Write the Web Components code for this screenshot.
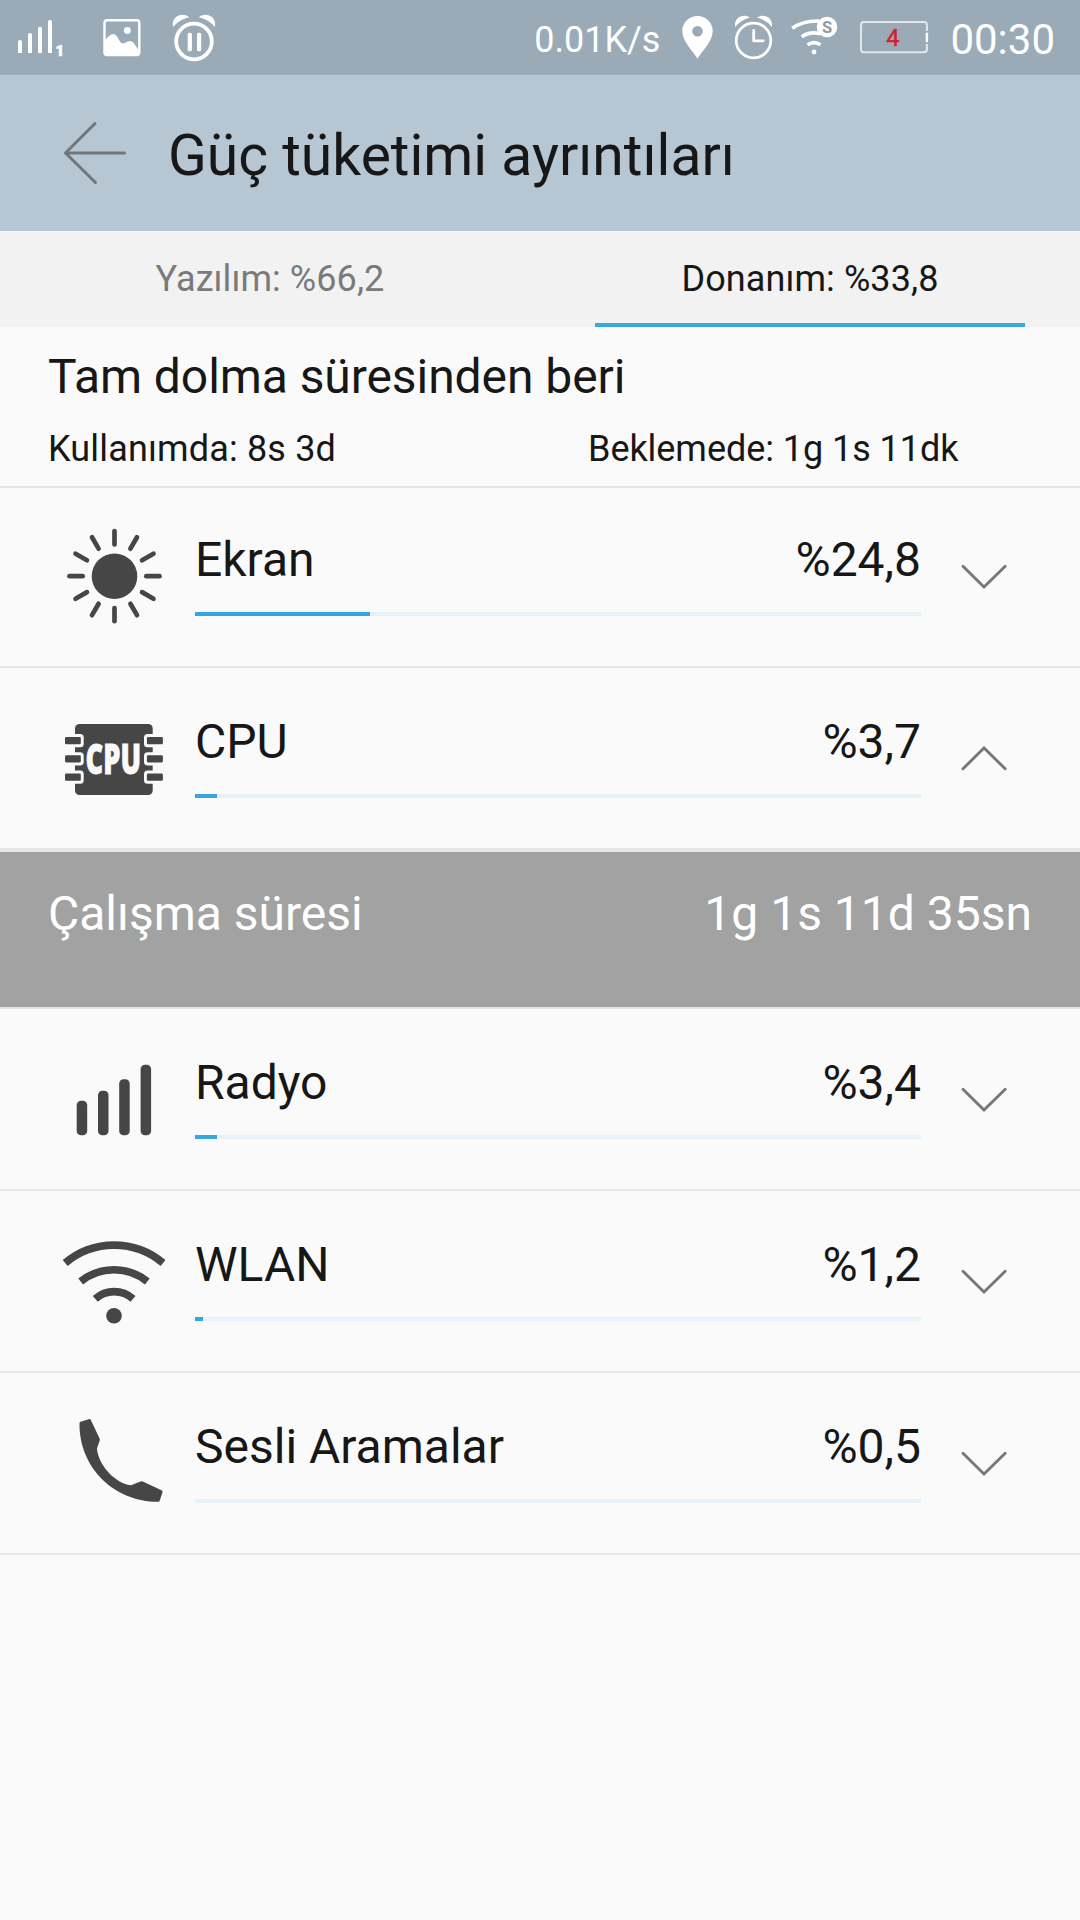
<!DOCTYPE html>
<html lang="tr">
<head>
<meta charset="utf-8">
<title>Güç tüketimi ayrıntıları</title>
<style>
  body {
    margin: 0;
    background: #fafafa;
    color: #171717;
    font-family: Roboto, "Noto Sans", sans-serif;
  }
</style>
</head>
<body>
<power-app></power-app>

<script>
const ICONS = {
  // status bar, drawn in bar coordinates
  signal: {
    box: "14 0 52 75",
    body: `<path d="M18 41.5q0-1.5 2-1.5t2 1.5V53h-4zM28 34.5q0-1.5 2-1.5t2 1.5V53h-4zM38 28.2q0-1.5 2-1.5t2 1.5V53h-4zM48 21.5q0-1.5 2-1.5t2 1.5V53h-4z"/>
      <text x="55.5" y="55.500" font-size="15" font-weight="900" stroke="currentColor" stroke-width=".6">1</text>`,
  },
  picture: {
    box: "100 0 44 75",
    body: `<rect x="104.5" y="20.2" width="34.8" height="34.8" rx="2.5" fill="none" stroke="currentColor" stroke-width="2.4"/>
      <circle cx="127.3" cy="30.5" r="3.4"/>
      <path d="M104 42q5-8 9.500-8c4 0 5.500 9 9.300 9.500 2.500 0 4-2.500 7.200-2.500 3.500 0 5.500 4.500 9 10V55h-35z"/>`,
  },
  pause: {
    box: "170 0 48 75",
    body: `<circle cx="194" cy="41.500" r="17.800" fill="none" stroke="currentColor" stroke-width="3.800"/>
      <rect x="187.700" y="32.700" width="4.200" height="18.600" rx="1.500"/><rect x="197" y="32.700" width="4.200" height="18.600" rx="1.500"/>
      <path d="M173.200 27C170.500 18 181 11 189.200 17.200Q179 19.500 173.200 27zM214.800 27C217.500 18 207 11 198.800 17.200Q209 19.500 214.800 27z"/>`,
  },
  pin: {
    box: "680 0 36 75",
    body: `<path fill-rule="evenodd" d="M697.500 16c-8.500 0-15.200 6.700-15.200 15 0 10.500 10 19 15.200 27.700C702.700 50 712.700 41.500 712.700 31c0-8.300-6.700-15-15.200-15zm0 9.900a5.300 5.300 0 1 1 0 10.600 5.300 5.300 0 0 1 0-10.600z"/>`,
  },
  alarm: {
    box: "732 0 44 75",
    body: `<circle cx="753.500" cy="40.500" r="17.300" fill="none" stroke="currentColor" stroke-width="2.700"/>
      <path d="M753.700 30.500v10.300h9.500" fill="none" stroke="currentColor" stroke-width="2.800" stroke-linecap="round" stroke-linejoin="round"/>
      <path d="M735.200 27C733.500 18.500 742 12.500 750 17.500Q740.500 20 735.200 27zM771.800 27C773.500 18.500 765 12.500 757 17.500Q766.500 20 771.800 27z"/>`,
  },
  wifis: {
    box: "788 0 52 75",
    body: `<g fill="none" stroke="currentColor" stroke-width="3.600"><path d="M792.200 28.300Q803 20.500 819 21"/><path d="M801.700 36.700Q810 31 820.500 33.800"/><path d="M807.500 44.800q6.500-4.400 13 0"/></g>
      <circle cx="814" cy="52" r="2.400"/><circle cx="827" cy="27" r="10.300"/>
      <text x="827" y="33" text-anchor="middle" font-size="16.500" font-weight="700" fill="#8a9ba8">S</text>`,
  },
  battery: {
    box: "858 0 72 75",
    body: `<path d="M926.900 31V25q0-3-3-3H864q-3 0-3 3v24.300q0 3 3 3h59.900q3 0 3-3V44" fill="none" stroke="#e0e8ec" stroke-width="2"/>
      <path d="M926.900 32.700v9.500" stroke="currentColor" stroke-width="2.400"/>
      <text x="892.800" y="45.700" text-anchor="middle" font-size="23.500" fill="#d3212c" stroke="#d3212c" stroke-width=".5">4</text>`,
  },

  // list rows
  sun: {
    box: "0 0 120 120",
    body: `<circle cx="60.500" cy="60.200" r="22.800"/><g stroke="currentColor" stroke-width="4.700" stroke-linecap="round">` +
      Array.from({ length: 12 }, (_, i) => `<path d="M60.500 15.200v13.200" transform="rotate(${i * 30} 60.500 60.200)"/>`).join("") + `</g>`,
  },
  cpu: {
    box: "0 0 120 120",
    body: `<rect x="21" y="26" width="77.700" height="71" rx="4.500"/>` +
      [39, 57.200, 75.600].map((y) => `
        <rect x="5" y="${y - 3}" width="24.700" height="13.200" rx="3.500" fill="#fafafa"/><rect x="11" y="${y}" width="15.800" height="7.200" rx="1.300"/>
        <rect x="90" y="${y - 3}" width="25" height="13.200" rx="3.500" fill="#fafafa"/><rect x="92.900" y="${y}" width="16" height="7.200" rx="1.300"/>`).join("") +
      `<text x="31.500" y="75.500" textLength="55.500" lengthAdjust="spacingAndGlyphs" font-family="Open Sans" font-size="42" font-weight="800" fill="#fafafa" stroke="#fafafa" stroke-width=".8">CPU</text>`,
  },
  radio: {
    box: "0 0 120 120",
    body: `<rect x="22.700" y="61.700" width="10.500" height="34.500" rx="4.300"/><rect x="44" y="51.700" width="10.500" height="44.500" rx="4.300"/>
      <rect x="65.200" y="40.300" width="10.500" height="55.900" rx="4.300"/><rect x="86.600" y="25.700" width="10.500" height="70.500" rx="4.300"/>`,
  },
  wlan: {
    box: "0 0 120 120",
    body: `<g fill="none" stroke="currentColor" stroke-width="7.600"><path d="M11.200 42a75.700 75.700 0 0 1 97.800 0"/><path d="M26.700 60.500a52.900 52.900 0 0 1 66.600 0"/><path d="M41.300 77.900a28.100 28.100 0 0 1 37.700 0"/></g>
      <circle cx="60" cy="94.700" r="7.800"/>`,
  },
  phone: {
    box: "0 0 120 120",
    body: `<path d="M26.500 18.800L35.500 16Q36.300 15.900 36.700 16.700L45.600 35.500Q46 36.500 45.700 37.500L43 45.500C44 61 60 80 77 82.300L86.500 78.600Q87.700 78.100 88.800 78.600L107.500 87.300Q108.900 88 108.500 89.300L105.800 97.500Q105.300 98.900 104 98.800C62 99 25 66 25.500 20.200Q25.600 19.100 26.500 18.800z"/>`,
  },

  back: {
    box: "0 0 64 64",
    body: `<path d="M62.500 32H3.500M33 2.500L3.500 32 33.500 61.500" fill="none" stroke="currentColor" stroke-width="3" stroke-linecap="round" stroke-linejoin="round"/>`,
  },
  down: {
    box: "0 0 48 26",
    body: `<path d="M3 2.200L24 23 45.200 2.200" fill="none" stroke="currentColor" stroke-width="2.900" stroke-linecap="round"/>`,
  },
  up: {
    box: "0 0 48 26",
    body: `<path d="M3 22.800L24 2 45.200 22.800" fill="none" stroke="currentColor" stroke-width="2.900" stroke-linecap="round"/>`,
  },
};

class UiIcon extends HTMLElement {
  constructor() {
    super();
    this.attachShadow({ mode: "open" });
  }

  connectedCallback() {
    const icon = ICONS[this.getAttribute("name")];
    const [, , width, height] = icon.box.split(" ");

    this.shadowRoot.innerHTML = `
      <style>
        :host { display: block; flex: none; }
        svg { display: block; fill: currentColor; }
      </style>
      <svg width="${width}" height="${height}" viewBox="${icon.box}">${icon.body}</svg>
    `;
  }
}

class StatusBar extends HTMLElement {
  constructor() {
    super();
    this.attachShadow({ mode: "open" });
    this.shadowRoot.innerHTML = `
      <style>
        :host {
          display: flex;
          justify-content: space-between;
          height: 75px;
          padding: 0 25px 0 14px;
          background: #9aabb7;
          color: #fff;
        }
        .left, .right { display: flex; align-items: center; }
        .picture { margin: 0 26px 0 34px; }
        .speed { font-size: 36px; line-height: 42px; padding-top: 4px; margin-right: 20px; }
        .time { font-size: 42px; line-height: 50px; padding-top: 4px; margin-left: 20px; }
        .alarm { margin-left: 16px; }
        .wifi { margin-left: 12px; }
        .battery { margin-left: 18px; }
      </style>
      <div class="left">
        <ui-icon name="signal"></ui-icon>
        <ui-icon class="picture" name="picture"></ui-icon>
        <ui-icon name="pause"></ui-icon>
      </div>
      <div class="right">
        <span class="speed">0.01K/s</span>
        <ui-icon name="pin"></ui-icon>
        <ui-icon class="alarm" name="alarm"></ui-icon>
        <ui-icon class="wifi" name="wifis"></ui-icon>
        <ui-icon class="battery" name="battery"></ui-icon>
        <span class="time">00:30</span>
      </div>
    `;
  }
}

class PageHeader extends HTMLElement {
  constructor() {
    super();
    this.attachShadow({ mode: "open" });
    this.shadowRoot.innerHTML = `
      <style>
        :host {
          display: flex;
          align-items: center;
          height: 156px;
          padding-left: 62px;
          background: #b7c6d3;
        }
        ui-icon { color: #727679; }
        h1 {
          margin: 0 0 0 42px;
          padding-top: 5px;
          font-size: 57px;
          line-height: 66px;
          font-weight: 400;
        }
      </style>
      <ui-icon name="back"></ui-icon>
      <h1><slot></slot></h1>
    `;
  }
}

class TabItem extends HTMLElement {
  constructor() {
    super();
    this.attachShadow({ mode: "open" });
    this.shadowRoot.innerHTML = `
      <style>
        :host {
          display: grid;
          grid-template-rows: 92px 4px;
          flex: 1;
          padding: 0 55.3px;
          background: #f2f2f2;
          color: #7a7a7a;
          font-size: 36px;
          line-height: 96px;
          letter-spacing: 0.08px;
          text-align: center;
        }
        :host([active]) { color: #171717; }
        :host([active]) .line { background: #39a7e0; }
      </style>
      <span><slot></slot></span>
      <div class="line"></div>
    `;
  }
}

class UsageSummary extends HTMLElement {
  constructor() {
    super();
    this.attachShadow({ mode: "open" });
    this.shadowRoot.innerHTML = `
      <style>
        :host {
          display: block;
          padding: 22px 0 16px 48px;
          border-bottom: 2px solid #e6e6e6;
        }
        h2 {
          margin: 0 0 23px;
          font-size: 48px;
          line-height: 56px;
          font-weight: 400;
          letter-spacing: -0.07px;
        }
        .times { display: grid; grid-template-columns: 540px 1fr; font-size: 36px; line-height: 42px; }
        ::slotted([slot="active"]) { letter-spacing: 0.16px; }
        ::slotted([slot="standby"]) { letter-spacing: -0.05px; }
      </style>
      <h2><slot></slot></h2>
      <div class="times">
        <slot name="active"></slot>
        <slot name="standby"></slot>
      </div>
    `;
  }
}

class UsageRow extends HTMLElement {
  constructor() {
    super();
    this.attachShadow({ mode: "open" });
  }

  connectedCallback() {
    const icon = this.getAttribute("icon");
    const value = this.getAttribute("value");
    const fill = this.getAttribute("fill") || "0";
    const arrow = this.hasAttribute("open") ? "up" : "down";

    this.shadowRoot.innerHTML = `
      <style>
        :host {
          display: flex;
          align-items: flex-end;
          height: 180px;
          padding-left: 54px;
          border-bottom: 2px solid #e6e6e6;
        }
        :host([first]) { height: 178px; }
        .icon { margin: 0 21px 30px 0; color: #464646; }
        .body { width: 726px; margin-bottom: 50px; }
        .text {
          display: flex;
          justify-content: space-between;
          margin-bottom: 24px;
          font-size: 48px;
          line-height: 56px;
        }
        .track { height: 4px; background: #e5f2f7; }
        .fill { width: ${fill}px; height: 4px; background: #34a6e0; }
        .arrow { margin: 0 0 76px 39px; color: #777; }
      </style>
      <ui-icon class="icon" name="${icon}"></ui-icon>
      <div class="body">
        <div class="text"><span><slot></slot></span><span>${value}</span></div>
        <div class="track"><div class="fill"></div></div>
      </div>
      <ui-icon class="arrow" name="${arrow}"></ui-icon>
    `;
  }
}

class UsageDetail extends HTMLElement {
  constructor() {
    super();
    this.attachShadow({ mode: "open" });
    this.shadowRoot.innerHTML = `
      <style>
        :host {
          display: flex;
          justify-content: space-between;
          box-sizing: border-box;
          height: 159px;
          padding: 34px 48px 0;
          border: solid #e6e6e6;
          border-width: 2px 0;
          background: #a2a2a2;
          color: #fff;
          font-size: 48px;
          line-height: 56px;
        }
      </style>
      <slot name="label"></slot>
      <slot name="value"></slot>
    `;
  }
}

class PowerApp extends HTMLElement {
  constructor() {
    super();
    this.attachShadow({ mode: "open" });
    this.shadowRoot.innerHTML = `
      <style>
        :host { display: block; width: 1080px; height: 1920px; overflow: hidden; }
        nav { display: flex; }
      </style>
      <status-bar></status-bar>
      <page-header>Güç tüketimi ayrıntıları</page-header>
      <nav>
        <tab-item>Yazılım: %66,2</tab-item>
        <tab-item active>Donanım: %33,8</tab-item>
      </nav>
      <usage-summary>
        Tam dolma süresinden beri
        <span slot="active">Kullanımda: 8s 3d</span>
        <span slot="standby">Beklemede: 1g 1s 11dk</span>
      </usage-summary>
      <usage-row first icon="sun" value="%24,8" fill="175">Ekran</usage-row>
      <usage-row open icon="cpu" value="%3,7" fill="22">CPU</usage-row>
      <usage-detail>
        <span slot="label">Çalışma süresi</span>
        <span slot="value">1g 1s 11d 35sn</span>
      </usage-detail>
      <usage-row icon="radio" value="%3,4" fill="22">Radyo</usage-row>
      <usage-row icon="wlan" value="%1,2" fill="8">WLAN</usage-row>
      <usage-row icon="phone" value="%0,5">Sesli Aramalar</usage-row>
    `;
  }
}

customElements.define("ui-icon", UiIcon);
customElements.define("status-bar", StatusBar);
customElements.define("page-header", PageHeader);
customElements.define("tab-item", TabItem);
customElements.define("usage-summary", UsageSummary);
customElements.define("usage-row", UsageRow);
customElements.define("usage-detail", UsageDetail);
customElements.define("power-app", PowerApp);
</script>
</body>
</html>
